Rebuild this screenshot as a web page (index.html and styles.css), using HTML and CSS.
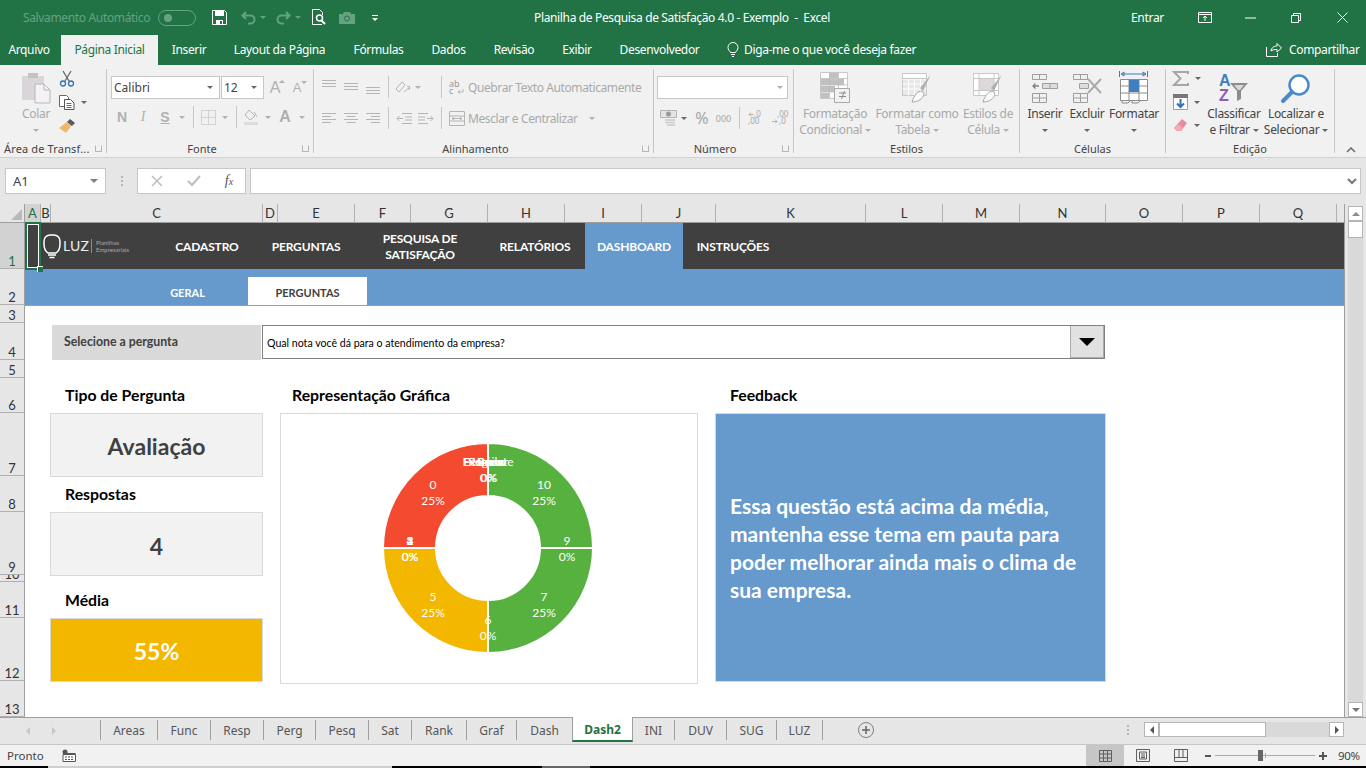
FILE: index.html
```html
<!DOCTYPE html>
<html lang="pt-BR">
<head>
<meta charset="utf-8">
<title>Planilha de Pesquisa de Satisfação 4.0 - Exemplo - Excel</title>
<link rel="stylesheet" href="styles.css">
</head>
<body>
<div class="app">
  <header class="titlebar">
    <div class="qat">
      <span class="autosave">Salvamento Automático</span>
      <span class="toggle"><i></i></span>
      <svg class="q-save" width="15" height="15" viewBox="0 0 15 15"><path d="M.5.5h12l2 2v12H.5z" fill="none" stroke="#fff"/><path d="M3 1h9v5H3zM4 10h7v4H4z" fill="#fff"/><path d="M8 11h2v3H8z" fill="#217346"/></svg>
      <svg class="q-undo" width="15" height="13" viewBox="0 0 15 13"><path d="M5 1L1.500 4.500 5 8M2 4.500h7.500a4 4 0 0 1 0 8H7" fill="none" stroke="#64a282" stroke-width="2"/></svg>
      <span class="car dim q-c1"></span>
      <svg class="q-redo" width="15" height="13" viewBox="0 0 15 13"><path d="M10 1l3.500 3.500L10 8M13 4.500H5.500a4 4 0 0 0 0 8H8" fill="none" stroke="#64a282" stroke-width="2"/></svg>
      <span class="car dim q-c2"></span>
      <svg class="q-prev" width="15" height="17" viewBox="0 0 15 17"><path d="M10 15.500H.5V.5h7l3 3V6" fill="none" stroke="#fff"/><circle cx="7.500" cy="9" r="3" fill="none" stroke="#fff" stroke-width="1.500"/><path d="M9.500 11.500l3.500 3.500" stroke="#fff" stroke-width="2"/></svg>
      <svg class="q-cam" width="16" height="13" viewBox="0 0 16 13"><path d="M0 3h4l1-2h6l1 2h4v10H0z" fill="#64a282"/><circle cx="8" cy="7.500" r="2.500" fill="none" stroke="#217346"/></svg>
      <svg class="q-more" width="8" height="8" viewBox="0 0 8 8"><path d="M1 1h6v1H1zM1 4h6L4 7z" fill="#fff"/></svg>
    </div>
    <div class="doc-title">Planilha de Pesquisa de Satisfação 4.0 - Exemplo&nbsp; -&nbsp; Excel</div>
    <div class="winctl">
      <span class="entrar">Entrar</span>
      <svg width="14" height="11" viewBox="0 0 14 11"><path d="M.5.5h13v10H.5zM.5 2.500h13M7 9V4.500M5 6l2-2 2 2" fill="none" stroke="#fff"/></svg>
      <svg width="11" height="2" viewBox="0 0 11 2"><path d="M0 1h11" stroke="#fff"/></svg>
      <svg width="10" height="10" viewBox="0 0 10 10"><path d="M.5 2.500h7v7h-7zM2.500 2.500v-2h7v7h-2" fill="none" stroke="#fff"/></svg>
      <svg width="11" height="11" viewBox="0 0 11 11"><path d="M.5.500l10 10M10.500.500l-10 10" stroke="#fff"/></svg>
    </div>
  </header>

  <nav class="tabs">
    <span class="tab">Arquivo</span>
    <span class="tab active">Página Inicial</span>
    <span class="tab">Inserir</span>
    <span class="tab">Layout da Página</span>
    <span class="tab">Fórmulas</span>
    <span class="tab">Dados</span>
    <span class="tab">Revisão</span>
    <span class="tab">Exibir</span>
    <span class="tab">Desenvolvedor</span>
    <span class="tell">
      <svg width="12" height="15" viewBox="0 0 12 15"><path d="M3.500 10.500C2.500 8.500 1 8 1 5.500a5 5 0 0 1 10 0c0 2.500-1.500 3-2.500 5zM4 12.500h4M5 14.500h2" fill="none" stroke="#fff"/></svg>
      Diga-me o que você deseja fazer
    </span>
    <span class="share">
      <svg width="16" height="15" viewBox="0 0 16 15"><path d="M.5 5v9.500h11V11M5 9c0-3 3-5 6-5V1.500L15.500 6 11 10V7.500C8 7.500 6 8 5 9z" fill="none" stroke="#fff"/></svg>
      Compartilhar
    </span>
  </nav>

  <section class="ribbon">
    <div class="grp g-clip">
      <div class="clip-body">
        <div class="big b-colar">
          <div class="ico"><svg width="30" height="31" viewBox="0 0 30 31"><path d="M1 4h22v24H1z" fill="#d9d5d9"/><path d="M7 1h10v5H7z" fill="#c4c0c4"/><path d="M14 12h9l6 6v13H14z" fill="#f4f2f4" stroke="#b9b5b9"/><path d="M23 12v6h6" fill="none" stroke="#b9b5b9"/></svg></div>
          <span class="cap off">Colar</span>
          <span class="cap off"><span class="car"></span></span>
        </div>
        <div class="clip-tools">
          <svg width="16" height="16" viewBox="0 0 16 16"><path d="M4 0l6 10M12 0L6 10" stroke="#666" stroke-width="1.300" fill="none"/><circle cx="4" cy="12.500" r="2.500" fill="none" stroke="#2e75b6" stroke-width="1.300"/><circle cx="12" cy="12.500" r="2.500" fill="none" stroke="#2e75b6" stroke-width="1.300"/></svg>
          <div class="tool-car"><svg width="16" height="15" viewBox="0 0 16 15"><path d="M.5.500h7l2 2v9H.5z" fill="#fff" stroke="#666"/><path d="M5.500 4.500h6l3.500 3.500v6.500H5.500z" fill="#fff" stroke="#555"/><path d="M7.500 8.500h5M7.500 10.500h5M7.500 12.500h5" stroke="#2e75b6"/></svg><span class="car dk"></span></div>
          <svg width="17" height="15" viewBox="0 0 17 15"><path d="M9 3l5 4-1 1-5-4z" fill="#444"/><path d="M11 1l5 4-2 2-5-4z" fill="#555"/><path d="M8 4l4 4-5 7-7-5z" fill="#eeb86b"/></svg>
        </div>
      </div>
      <div class="glabel lbl-clip"><span>Área de Transf...</span><span class="launch"></span></div>
    </div>

    <div class="grp g-font">
      <div class="font-r1">
        <div class="combo"><span>Calibri</span><span class="car dk"></span></div>
        <div class="combo"><span>12</span><span class="car dk"></span></div>
        <span class="letter grow">A</span>
        <span class="letter shrink">A</span>
      </div>
      <div class="font-r2">
        <b class="btn-l">N</b><i class="btn-l serif">I</i><u class="btn-l bold">S</u><span class="car"></span><span class="vsep"></span>
        <svg width="15" height="15" viewBox="0 0 15 15"><path d="M.5.500h14v14H.5zM7.500.500v14M.5 7.500h14" fill="none" stroke="#b5b5b5" stroke-dasharray="1 1"/></svg><span class="car"></span><span class="vsep"></span>
        <svg width="16" height="16" viewBox="0 0 16 16"><path d="M6 1l6 6-5 4-5-5zM11 3l3 5" fill="none" stroke="#b5b5b5"/><path d="M1 13h14v3H1z" fill="#ddd"/></svg><span class="car"></span>
        <span class="letter big-a">A</span><span class="car"></span>
      </div>
      <div class="glabel lbl-font"><span>Fonte</span><span class="launch"></span></div>
    </div>

    <div class="grp g-align">
      <div class="align-top">
        <div class="al-r1">
          <svg width="15" height="15" viewBox="0 0 15 15"><path d="M0 .5h14M0 3.500h14M0 6.500h14" stroke="#b5b5b5"/></svg>
          <svg width="15" height="15" viewBox="0 0 15 15"><path d="M0 3.500h14M0 6.500h14M0 9.500h14" stroke="#b5b5b5"/></svg>
          <svg width="15" height="15" viewBox="0 0 15 15"><path d="M0 7.500h14M0 10.500h14M0 13.500h14" stroke="#b5b5b5"/></svg>
          <span class="vsep"></span>
          <svg width="16" height="16" viewBox="0 0 16 16"><path d="M1 10l6-7 3 3-6 7zM9 13l6-5M12 7l3 1-1 3" fill="none" stroke="#b5b5b5"/></svg>
          <span class="car"></span><span></span>
          <span class="vsep"></span>
          <div class="wrap-cell"><svg width="16" height="15" viewBox="0 0 16 15"><text class="ab" x="0" y="7">ab</text><text class="ab" x="0" y="14">c</text><path d="M14 9v3H9m2-1.500L9 12l2 1.500" fill="none" stroke="#b5b5b5"/></svg><span class="off rtext">Quebrar Texto Automaticamente</span></div>
        </div>
        <div class="al-r2">
          <svg width="15" height="13" viewBox="0 0 15 13"><path d="M0 1.500h14M0 4.500h9M0 7.500h14M0 10.500h9" stroke="#b5b5b5"/></svg>
          <svg width="15" height="13" viewBox="0 0 15 13"><path d="M0 1.500h14M2.500 4.500h9M0 7.500h14M2.500 10.500h9" stroke="#b5b5b5"/></svg>
          <svg width="15" height="13" viewBox="0 0 15 13"><path d="M0 1.500h14M5 4.500h9M0 7.500h14M5 10.500h9" stroke="#b5b5b5"/></svg>
          <span class="vsep"></span>
          <svg width="16" height="13" viewBox="0 0 16 13"><path d="M6 1.500h10M6 11.500h10M9 5h7M9 8h7M7 6.500H1M3.500 4L1 6.500 3.500 9" fill="none" stroke="#b5b5b5"/></svg>
          <svg width="16" height="13" viewBox="0 0 16 13"><path d="M0 1.500h10M0 11.500h10M0 5h7M0 8h7M9 6.500h6M12.500 4L15 6.500 12.500 9" fill="none" stroke="#b5b5b5"/></svg>
          <span class="vsep"></span>
          <div class="wrap-cell"><svg width="16" height="15" viewBox="0 0 16 15"><path d="M.5.500h15v14H.5zM.5 5h15M.5 10h15M3 7.500h10M3 7.500l2-1.500M3 7.500L5 9M13 7.500L11 6M13 7.500L11 9" fill="none" stroke="#b5b5b5"/></svg><span class="off rtext">Mesclar e Centralizar</span><span class="car merge-car"></span></div>
        </div>
      </div>
      <div class="glabel lbl-align"><span>Alinhamento</span><span class="launch"></span></div>
    </div>

    <div class="grp g-num">
      <div class="combo combo-num"><span></span><span class="car"></span></div>
      <div class="num-r2">
        <svg width="17" height="16" viewBox="0 0 17 16"><path d="M.5.500h16v7H.5z" fill="#e4e4e4" stroke="#b5b5b5"/><circle cx="8.500" cy="4" r="2.500" fill="#999"/><path d="M5 10h10M5 12.500h10M7 15h8" stroke="#c9c9c9" stroke-width="1.500"/></svg>
        <span class="car dk"></span>
        <span class="pct">%</span>
        <span class="thou">000</span>
        <span class="vsep"></span>
        <svg width="18" height="14" viewBox="0 0 18 14"><text class="dec" x="6" y="6">,0</text><text class="dec" x="0" y="13">,00</text><path d="M1 3.500h5M1 3.500l2-2M1 3.500l2 2" fill="none" stroke="#b5b5b5"/></svg>
        <svg width="18" height="14" viewBox="0 0 18 14"><text class="dec" x="6" y="6">,00</text><text class="dec" x="8" y="13">,0</text><path d="M1 10.500h5M6 10.500l-2-2M6 10.500l-2 2" fill="none" stroke="#b5b5b5"/></svg>
      </div>
      <div class="glabel lbl-num"><span>Número</span><span class="launch"></span></div>
    </div>

    <div class="grp g-styles">
      <div class="bigrow">
        <div class="big">
          <div class="ico"><svg width="30" height="31" viewBox="0 0 30 31"><path d="M.5.500h27v26H.5z" fill="#fff" stroke="#c8c8c8"/><path d="M.5 6.500h27M.5 13h27M.5 20h27M9.500.500v26M18.500.500v26" stroke="#c8c8c8"/><path d="M9 1h9v5H9zM1 7h23v6H1zM1 14h14v6H1zM1 21h8v5H1z" fill="#b9b9b9" opacity=".9"/><path d="M14.500 16.500h15v14h-15z" fill="#f2f2f2" stroke="#a9a9a9"/><path d="M19 21h7M19 24.500h7M24.500 19l-3 8" stroke="#8c8c8c" fill="none"/></svg></div>
          <span class="cap off">Formatação</span>
          <span class="cap off">Condicional <span class="car"></span></span>
        </div>
        <div class="big">
          <div class="ico"><svg width="30" height="30" viewBox="0 0 30 30"><path d="M.5 2.500h24v20H.5z" fill="#e8e8e8" stroke="#c8c8c8"/><path d="M.5 6h24M.5 11h24M.5 16h24M6.500 2.500v20M12.500 2.500v20M18.500 2.500v20" stroke="#fff"/><path d="M.5.500h24v5H.5z" fill="#fff" stroke="#c8c8c8"/><path d="M28.500 2L18 15l3 3z" fill="#b0b0b0"/><path d="M10 29c2-7 6-11 10-11l2 3c-1 5-6 8-12 8z" fill="#fafafa" stroke="#a9a9a9"/></svg></div>
          <span class="cap off">Formatar como</span>
          <span class="cap off">Tabela <span class="car"></span></span>
        </div>
        <div class="big">
          <div class="ico"><svg width="30" height="30" viewBox="0 0 30 30"><path d="M.5.500h25v22H.5z" fill="#fff" stroke="#c8c8c8"/><path d="M6 5.500h15v12H6z" fill="#dcd8dc"/><path d="M.5 5.500h25M.5 17.500h25M6 .500v22M21 .500v22" stroke="#c8c8c8"/><path d="M28.500 2L18 15l3 3z" fill="#b0b0b0"/><path d="M10 29c2-7 6-11 10-11l2 3c-1 5-6 8-12 8z" fill="#fafafa" stroke="#a9a9a9"/></svg></div>
          <span class="cap off">Estilos de</span>
          <span class="cap off">Célula <span class="car"></span></span>
        </div>
      </div>
      <div class="glabel"><span>Estilos</span></div>
    </div>

    <div class="grp g-cells">
      <div class="bigrow">
        <div class="big">
          <div class="ico"><svg width="28" height="30" viewBox="0 0 28 30"><path d="M1.500 1.500h14v5h-14zM8.500 1.500v5M1.500 20.500h14v9h-14zM1.500 25h14M8.500 20.500v9" fill="none" stroke="#9e9e9e"/><path d="M11.500 10.500h15v5h-15zM19 10.500v5" fill="#ddd" stroke="#9e9e9e"/><path d="M8 13H2M4.500 10.500L2 13l2.500 2.500" fill="none" stroke="#7f7f7f" stroke-width="1.300"/></svg></div>
          <span class="cap on">Inserir</span>
          <span class="cap on"><span class="car dk"></span></span>
        </div>
        <div class="big">
          <div class="ico"><svg width="30" height="30" viewBox="0 0 30 30"><path d="M1.500 1.500h14v5h-14zM8.500 1.500v5M1.500 20.500h14v9h-14zM1.500 25h14M8.500 20.500v9" fill="none" stroke="#9e9e9e"/><path d="M7.500 10.500h9v5h-9z" fill="#ddd" stroke="#9e9e9e"/><path d="M16 6l13 14M29 6L16 20" stroke="#aaa" stroke-width="2"/></svg></div>
          <span class="cap on">Excluir</span>
          <span class="cap on"><span class="car dk"></span></span>
        </div>
        <div class="big">
          <div class="ico"><svg width="30" height="33" viewBox="0 0 30 33"><path d="M.5 0v6M28.500 0v6M2 3h25M2 3l3-2v4zM27 3l-3-2v4z" fill="none" stroke="#3a7dbd"/><path d="M1.500 8.500h27v21h-27zM1.500 15h27M1.500 22h27M10 8.500v21M20 8.500v21" fill="#fff" stroke="#8c8c8c"/><path d="M10 9h10v12H10z" fill="#3f7fbf"/><path d="M3 30v2h6l2-2M13 30v2h6l2-2" fill="none" stroke="#8c8c8c"/></svg></div>
          <span class="cap on">Formatar</span>
          <span class="cap on"><span class="car dk"></span></span>
        </div>
      </div>
      <div class="glabel"><span>Células</span></div>
    </div>

    <div class="grp g-edit">
      <div class="bigrow">
        <div class="edit-tools">
          <div class="tool-car"><svg width="16" height="15" viewBox="0 0 16 15"><path d="M15 3V1H1l6.500 6.500L1 14h14v-2" fill="none" stroke="#a6a6a6" stroke-width="2"/></svg><span class="car dk"></span></div>
          <div class="tool-car"><svg width="15" height="16" viewBox="0 0 15 16"><path d="M.5.500h14v15H.5z" fill="#fff" stroke="#9e9e9e"/><path d="M0 0h15v4H0z" fill="#777"/><path d="M7.500 5v8M4 9.500l3.500 3.500L11 9.500" fill="none" stroke="#2e75b6" stroke-width="2"/></svg><span class="car dk"></span></div>
          <div class="tool-car"><svg width="15" height="14" viewBox="0 0 15 14"><path d="M9 1l5 4-6 8H4L1 10z" fill="#ec8a9a"/><path d="M1 10l3 3h4l2-3-5-4z" fill="#f4a8b4"/></svg><span class="car dk"></span></div>
        </div>
        <div class="big">
          <div class="ico"><svg width="30" height="28" viewBox="0 0 30 28"><text class="az-a" x="0" y="12">A</text><text class="az-z" x="0" y="27">Z</text><path d="M11 9h18l-7 8v8l-4 2V17z" fill="#8c8c8c"/><path d="M15 11h10l-4 5h-2z" fill="#d9d9d9"/></svg></div>
          <span class="cap on">Classificar</span>
          <span class="cap on">e Filtrar <span class="car dk"></span></span>
        </div>
        <div class="big">
          <div class="ico"><svg width="30" height="30" viewBox="0 0 30 30"><circle cx="18" cy="12" r="9.500" fill="#fff" stroke="#4a8ac9" stroke-width="2.500"/><path d="M11 19L2 28" stroke="#4a8ac9" stroke-width="4" stroke-linecap="round"/></svg></div>
          <span class="cap on">Localizar e</span>
          <span class="cap on">Selecionar <span class="car dk"></span></span>
        </div>
      </div>
      <div class="glabel"><span>Edição</span></div>
    </div>

    <div class="collapse"><svg width="10" height="6" viewBox="0 0 10 6"><path d="M1 5l4-4 4 4" fill="none" stroke="#666" stroke-width="1.500"/></svg></div>
  </section>

  <section class="fbar">
    <div class="namebox"><span>A1</span><span class="car big-car"></span></div>
    <div class="fdots"></div>
    <div class="fbtns">
      <svg width="12" height="12" viewBox="0 0 12 12"><path d="M1 1l10 10M11 1L1 11" stroke="#bdbdbd" stroke-width="1.500"/></svg>
      <svg width="14" height="12" viewBox="0 0 14 12"><path d="M1 6l4 4 8-9" fill="none" stroke="#bdbdbd" stroke-width="2"/></svg>
      <i class="fx">f<small>x</small></i>
    </div>
    <div class="finput"><svg width="10" height="6" viewBox="0 0 10 6"><path d="M1 1l4 4 4-4" fill="none" stroke="#777" stroke-width="2"/></svg></div>
  </section>

  <section class="workarea">
    <div class="sheet">
      <div class="corner"><span></span></div>
      <div class="ch on-col">A</div><div class="ch">B</div><div class="ch">C</div><div class="ch">D</div><div class="ch">E</div><div class="ch">F</div><div class="ch">G</div><div class="ch">H</div><div class="ch">I</div><div class="ch">J</div><div class="ch">K</div><div class="ch">L</div><div class="ch">M</div><div class="ch">N</div><div class="ch">O</div><div class="ch">P</div><div class="ch">Q</div><div class="ch filler"></div>
      <div class="rh on-row">1</div><div class="rh">2</div><div class="rh">3</div><div class="rh">4</div><div class="rh">5</div><div class="rh">6</div><div class="rh">7</div><div class="rh">8</div><div class="rh">9</div><div class="rh">10</div><div class="rh">11</div><div class="rh">12</div><div class="rh">13</div>

      <div class="topnav">
        <div class="logo">
          <svg width="18" height="25" viewBox="0 0 18 25"><path d="M5 19C2 17 1 14.500 1 10V7a6 6 0 0 1 6-6h4a6 6 0 0 1 6 6v3c0 4.500-1 7-4 9z" fill="none" stroke="#fff" stroke-width="1.500"/><path d="M5 21h8M6.500 23.500h5" stroke="#fff" stroke-width="1.500"/></svg>
          <span class="luz">LUZ</span>
          <span class="logo-sep"></span>
          <span class="logo-sub">Planilhas<br>Empresariais</span>
        </div>
        <span class="ni ni-cad">CADASTRO</span>
        <span class="ni ni-per">PERGUNTAS</span>
        <span class="ni ni-pes">PESQUISA DE<br>SATISFAÇÃO</span>
        <span class="ni ni-rel">RELATÓRIOS</span>
        <span class="ni ni-das">DASHBOARD</span>
        <span class="ni ni-ins">INSTRUÇÕES</span>
      </div>
      <div class="a1"><i></i></div>

      <div class="subnav">
        <span class="si si-ger">GERAL</span>
        <span class="si si-per">PERGUNTAS</span>
      </div>

      <div class="qlabel">Selecione a pergunta</div>
      <div class="qselect"><span>Qual nota você dá para o atendimento da empresa?</span><div class="qbtn"><i></i></div></div>

      <div class="ttl ttl-tipo">Tipo de Pergunta</div>
      <div class="card card-tipo">Avaliação</div>
      <div class="ttl ttl-resp">Respostas</div>
      <div class="card card-resp">4</div>
      <div class="ttl ttl-med">Média</div>
      <div class="card card-med">55%</div>

      <div class="ttl ttl-graf">Representação Gráfica</div>
      <div class="chart">
        <svg width="416" height="268" viewBox="0 0 416 268">
          <g transform="translate(207 134)" class="donut">
            <path class="s-green" d="M0-105A105 105 0 0 1 105 0H52A52 52 0 0 0 0-52Z"/>
            <path class="s-green" d="M105 0A105 105 0 0 1 0 105V52A52 52 0 0 0 52 0Z"/>
            <path class="s-yellow" d="M0 105A105 105 0 0 1-105 0H-52A52 52 0 0 0 0 52Z"/>
            <path class="s-red" d="M-105 0A105 105 0 0 1 0-105V-52A52 52 0 0 0-52 0Z"/>
            <text x="56" y="-64">10</text><text x="56" y="-48">25%</text>
            <text x="-55" y="-64">0</text><text x="-55" y="-48">25%</text>
            <text x="79" y="-8">9</text><text x="79" y="8">0%</text>
            <text x="56" y="48">7</text><text x="56" y="64">25%</text>
            <text x="0" y="71">6</text><text x="0" y="87">0%</text>
            <text x="-55" y="48">5</text><text x="-55" y="64">25%</text>
            <text x="-78" y="-8">1</text><text x="-78" y="-8">2</text><text x="-78" y="-8">3</text><text x="-78" y="-8">4</text>
            <text x="-78" y="8">0%</text><text x="-78" y="8">0%</text>
            <text x="0" y="-87">Excelente</text><text x="0" y="-87">Regular</text><text x="-3" y="-87">Péssimo</text><text x="3" y="-87">Ruim</text><text x="1" y="-87">Bom</text>
            <text x="0" y="-71">0%</text><text x="1" y="-71">0%</text>
          </g>
        </svg>
      </div>

      <div class="ttl ttl-feed">Feedback</div>
      <div class="feedback">Essa questão está acima da média, mantenha esse tema em pauta para poder melhorar ainda mais o clima de sua empresa.</div>
    </div>

    <aside class="vscroll">
      <div class="vbtn"><span class="tri-up"></span></div>
      <div class="vthumb"></div>
      <div class="vtrack"></div>
      <div class="vbtn"><span class="tri-dn"></span></div>
    </aside>
  </section>

  <section class="sheetbar">
    <div class="sheetnav"><span class="tri-l"></span><span class="tri-r"></span></div>
    <span class="st">Areas</span><span class="st">Func</span><span class="st">Resp</span><span class="st">Perg</span><span class="st">Pesq</span><span class="st">Sat</span><span class="st">Rank</span><span class="st">Graf</span><span class="st st-pre">Dash</span><span class="st st-on">Dash2</span><span class="st">INI</span><span class="st">DUV</span><span class="st">SUG</span><span class="st">LUZ</span>
    <div class="addsheet"><svg width="18" height="18" viewBox="0 0 18 18"><circle cx="9" cy="9" r="7.500" fill="none" stroke="#808080"/><path d="M9 5v8M5 9h8" stroke="#666" stroke-width="1.500"/></svg></div>
    <div class="hdots"></div>
    <div class="hscroll">
      <div class="hbtn"><span class="tri-lk"></span></div>
      <div class="hthumb"></div>
      <div class="htrack"></div>
      <div class="hbtn"><span class="tri-rk"></span></div>
    </div>
  </section>

  <footer class="status">
    <span class="pronto">Pronto</span>
    <svg class="macro" width="14" height="13" viewBox="0 0 14 13"><circle cx="3" cy="3" r="2.500" fill="#555"/><path d="M1 5.500h12.500v7H1z" fill="#fff" stroke="#555"/><path d="M3 4h10.500v2H3z" fill="#555"/><path d="M3 8h2M6 8h2M9 8h2M3 10.500h2M6 10.500h2M9 10.500h2" stroke="#555"/></svg>
    <div class="views">
      <div class="vw vw-on"><svg width="13" height="12" viewBox="0 0 13 12"><path d="M.5.500h12v11H.5zM.5 4h12M.5 8h12M4.500.500v11M8.500.500v11" fill="none" stroke="#5f5f5f"/></svg></div>
      <div class="vw"><svg width="14" height="13" viewBox="0 0 14 13"><path d="M.5.500h13v12H.5z" fill="none" stroke="#5f5f5f"/><path d="M3.500 3h7v7h-7zM5 5h4M5 7h4M5 8.500h4" fill="none" stroke="#5f5f5f"/></svg></div>
      <div class="vw"><svg width="14" height="13" viewBox="0 0 14 13"><path d="M.5.500h13v12H.5zM.5 8.500h13M5 .500v8M9 .500v8" fill="none" stroke="#5f5f5f"/></svg></div>
    </div>
    <div class="zoomctl">
      <i class="zminus"></i>
      <div class="zslider"><i class="zthumb"></i><i class="ztick"></i></div>
      <svg width="8" height="8" viewBox="0 0 8 8"><path d="M0 4h8M4 0v8" stroke="#555" stroke-width="2"/></svg>
      <span class="zpct">90%</span>
    </div>
  </footer>
  <div class="edge"><i class="e-k1"></i><i class="e-g1"></i><i class="e-k2"></i><i class="e-g2"></i><i class="e-k3"></i></div>
</div>
</body>
</html>
```

FILE: styles.css
```css
* { box-sizing: border-box; }
html, body { margin: 0; padding: 0; }
body { width: 1366px; height: 768px; overflow: hidden; background: #e6e6e6; font-family: "Noto Sans", "Open Sans", sans-serif; font-size: 12px; color: #444; }
.app { display: flex; flex-direction: column; width: 1366px; height: 768px; }
svg { display: block; flex: none; overflow: visible; }

/* title bar */
.titlebar { height: 35px; background: #217346; color: #fff; display: flex; align-items: center; }
.qat { width: 534px; flex: none; display: flex; align-items: center; padding-left: 23px; }
.autosave { width: 135px; flex: none; color: #64a282; white-space: nowrap; letter-spacing: -.35px; }
.toggle { width: 38px; height: 16px; flex: none; border: 1px solid #64a282; border-radius: 8px; position: relative; }
.toggle i { position: absolute; left: 5px; top: 3px; width: 8px; height: 8px; border-radius: 50%; background: #64a282; }
.q-save { margin-left: 16px; }
.q-undo { margin-left: 14px; }
.q-c1 { margin-left: 4px; }
.q-redo { margin-left: 10px; }
.q-c2 { margin-left: 4px; }
.q-prev { margin-left: 11px; }
.q-cam { margin-left: 12px; }
.q-more { margin-left: 16px; }
.car { display: inline-block; width: 0; height: 0; border-left: 3px solid transparent; border-right: 3px solid transparent; border-top: 3px solid #b0b0b0; vertical-align: middle; flex: none; }
.car.dk { border-top-color: #666; }
.car.dim { border-top-color: #64a282; }
.doc-title { width: 400px; flex: none; white-space: pre; letter-spacing: -.35px; }
.winctl { flex: 1; display: grid; grid-template-columns: 197px 51px 46px 45px 46px 46px; align-items: center; justify-items: center; }
.entrar { grid-column: 2; justify-self: start; letter-spacing: -.3px; }

/* tabs */
.tabs { height: 30px; background: #217346; color: #fff; display: grid; grid-template-columns: 58px 100px 62px 119px 79px 61px 70px 56px 109px 1fr 100px; align-items: stretch; }
.tab { display: flex; align-items: center; justify-content: center; white-space: nowrap; letter-spacing: -.35px; padding-bottom: 2px; }
.tab:first-child { margin-left: 3px; margin-right: 3px; }
.tab.active { background: #f1f1f1; color: #217346; margin-left: 3px; }
.tell { display: flex; align-items: center; gap: 5px; padding-left: 13px; white-space: nowrap; letter-spacing: -.35px; padding-bottom: 2px; }
.share { display: flex; align-items: center; gap: 7px; white-space: nowrap; letter-spacing: -.35px; padding-bottom: 2px; }

/* ribbon */
.ribbon { height: 93px; background: #f1f1f1; border-bottom: 1px solid #d2d2d2; display: flex; padding-top: 4px; }
.grp { height: 84px; border-right: 1px solid #c6c6c6; display: flex; flex-direction: column; flex: none; }
.g-clip { width: 107px; }
.g-font { width: 207px; padding-left: 4px; }
.g-align { width: 340px; }
.g-num { width: 140px; padding-left: 3px; }
.g-styles { width: 226px; }
.g-cells { width: 146px; }
.g-edit { width: 169px; }
.glabel { margin-top: auto; margin-bottom: -3px; height: 14px; line-height: 14px; font-size: 11px; color: #444; position: relative; text-align: center; white-space: nowrap; }
.lbl-clip { text-align: left; padding-left: 4px; letter-spacing: .15px; }
.lbl-font { padding-right: 20px; }
.lbl-align { padding-right: 16px; }
.lbl-num { padding-right: 20px; }
.launch { position: absolute; right: 4px; top: 3px; width: 7px; height: 7px; border: 1px solid #b5b5b5; border-top-color: transparent; }
.clip-body { display: flex; padding-left: 20px; }
.b-colar { width: 32px; }
.clip-tools { display: flex; flex-direction: column; gap: 8px; margin-left: 7px; padding-top: 2px; }
.tool-car { display: flex; align-items: center; gap: 6px; }
.big { display: flex; flex-direction: column; align-items: center; }
.ico { height: 37px; display: flex; align-items: center; justify-content: center; }
.cap { height: 16px; line-height: 16px; white-space: nowrap; font-size: 12px; letter-spacing: -.3px; }
.off { color: #a9a9a9; }
.on { color: #444; }
.font-r1 { display: grid; grid-template-columns: 110px 43px 22px 22px; margin-top: 7px; height: 23px; align-items: center; }
.combo { height: 23px; background: #fff; border: 1px solid #c6c6c6; display: flex; align-items: center; justify-content: space-between; padding: 0 6px 0 2px; color: #444; margin-right: 1px; }
.combo + .combo { margin-right: 0; }
.letter { font-family: "Liberation Sans", sans-serif; text-align: center; color: #b0b0b0; position: relative; }
.grow { font-size: 16px; }
.shrink { font-size: 13px; }
.grow::after, .shrink::after { content: ""; position: absolute; left: 15px; top: 1px; border-left: 3px solid transparent; border-right: 3px solid transparent; }
.grow::after { border-bottom: 3px solid #b0b0b0; }
.shrink::after { border-top: 3px solid #b0b0b0; }
.big-a { font-size: 16px; font-weight: 700; }
.font-r2 { display: grid; grid-template-columns: 22px 20px 24px 10px 12px 18px 16px 6px 24px 10px 24px 10px; height: 24px; margin-top: 6px; align-items: center; justify-items: center; }
.btn-l { font-size: 14px; color: #b0b0b0; font-family: "Liberation Sans", sans-serif; text-decoration-thickness: 1px; }
.btn-l.serif { font-family: "Liberation Serif", serif; font-style: italic; }
.btn-l.bold { font-weight: 700; }
.vsep { width: 1px; height: 22px; background: #c6c6c6; justify-self: center; }
.align-top { padding: 5px 0 0 4px; display: flex; flex-direction: column; gap: 5px; }
.al-r1, .al-r2 { height: 26px; display: grid; align-items: center; justify-items: center; }
.al-r1 { grid-template-columns: 22px 23px 21px 8px 22px 8px 15px 8px 1fr; }
.al-r2 { grid-template-columns: 22px 23px 21px 8px 23px 22px 8px 1fr; }
.wrap-cell { justify-self: start; display: flex; align-items: center; padding-left: 4px; gap: 3px; white-space: nowrap; }
.rtext { letter-spacing: -.4px; }
.merge-car { margin-left: 8px; }
.ab { font-size: 9px; fill: #999; font-family: "Noto Sans", sans-serif; }
.combo-num { width: 131px; margin-top: 7px; flex: none; padding-right: 4px; border-color: #c6c6c6; }
.num-r2 { display: grid; grid-template-columns: 22px 10px 26px 17px 14px 22px 24px; height: 24px; margin-top: 7px; align-items: center; justify-items: center; }
.pct { font-size: 16px; color: #a6a6a6; }
.thou { font-size: 9px; color: #a6a6a6; }
.dec { font-size: 8px; fill: #a6a6a6; font-family: "Noto Sans", sans-serif; }
.bigrow { display: grid; }
.g-styles .bigrow { grid-template-columns: 82px 82px 60px; }
.g-cells .bigrow { grid-template-columns: 50px 34px 60px; }
.g-edit .bigrow { grid-template-columns: 41px 54px 70px; }
.edit-tools { display: flex; flex-direction: column; gap: 8px; padding: 2px 0 0 7px; }
.az-a { font: 700 16px "Liberation Sans", sans-serif; fill: #3f7fbf; }
.az-z { font: 700 16px "Liberation Sans", sans-serif; fill: #8f5bb5; }
.collapse { flex: 1; display: flex; align-items: flex-end; justify-content: center; height: 84px; }

/* formula bar */
.fbar { height: 46px; padding: 10px 5px 0; display: flex; align-items: flex-start; background: #e6e6e6; }
.namebox { width: 101px; height: 26px; background: #fff; border: 1px solid #c6c6c6; display: flex; align-items: center; justify-content: space-between; padding: 0 7px; font-size: 13px; color: #444; }
.big-car { border-left-width: 4px; border-right-width: 4px; border-top-width: 4px; border-top-color: #808080; }
.fdots { width: 31px; height: 26px; position: relative; }
.fdots::after { content: ""; position: absolute; left: 15px; top: 8px; width: 2px; height: 10px; background: repeating-linear-gradient(#b5b5b5 0 2px, transparent 2px 4px); }
.fbtns { width: 109px; height: 26px; background: #fff; border: 1px solid #c6c6c6; display: grid; grid-template-columns: 37px 38px 1fr; align-items: center; justify-items: center; }
.fx { font-family: "Liberation Serif", serif; font-size: 14px; color: #555; }
.fx small { font-size: 10px; }
.finput { flex: 1; height: 26px; margin-left: 4px; background: #fff; border: 1px solid #c6c6c6; display: flex; align-items: center; justify-content: flex-end; padding-right: 3px; }

/* sheet */
.workarea { height: 514px; display: flex; border-bottom: 1px solid #9e9e9e; }
.sheet { width: 1345px; flex: none; background: #fff; display: grid; grid-template-columns: 25px 16px 10px 212px 15px 77px 56px 77px 77px 77px 74px 150px 77px 77px 86px 77px 77px 77px 8px; grid-template-rows: 19px 46px 36px 18px 37px 18px 35px 63px 36px 63px 7px 36px 63px 36px; font-family: Lato, sans-serif; border-right: 1px solid #9e9e9e; overflow: hidden; }
.corner { background: #e6e6e6; border-right: 1px solid #9e9e9e; border-bottom: 1px solid #9e9e9e; position: relative; }
.corner span { position: absolute; right: 2px; bottom: 2px; width: 0; height: 0; border-left: 11px solid transparent; border-bottom: 11px solid #b9b9b9; }
.ch { background: #e6e6e6; border-right: 1px solid #b0b0b0; border-bottom: 1px solid #9e9e9e; display: flex; align-items: center; justify-content: center; font-size: 13px; color: #333; overflow: hidden; }
.ch.on-col { background: #d2d2d2; color: #217346; }
.ch.filler { border-right: 0; }
.rh { grid-column: 1; background: #e6e6e6; border-right: 1px solid #9e9e9e; border-bottom: 1px solid #b0b0b0; display: flex; align-items: flex-end; justify-content: center; font-size: 13px; line-height: 13px; color: #333; overflow: hidden; }
.rh.on-row { background: #d2d2d2; color: #217346; }
.topnav { grid-column: 2 / 20; grid-row: 2; background: #404040; display: flex; color: #fff; font-weight: 700; font-size: 12px; text-align: center; line-height: 16px; letter-spacing: -.15px; }
.logo { width: 132px; flex: none; display: flex; align-items: center; padding-left: 18px; color: #eee; letter-spacing: 0; }
.luz { margin-left: 2px; font-weight: 400; font-size: 14px; width: 24px; flex: none; letter-spacing: .2px; }
.logo-sep { width: 1px; height: 14px; background: #8c8c8c; margin: 0 4px 0 4px; flex: none; }
.logo-sub { font-size: 6px; line-height: 7px; font-weight: 400; text-align: left; color: #aaa; white-space: nowrap; }
.ni { display: flex; align-items: center; justify-content: center; flex: none; padding-top: 2px; }
.ni-cad { width: 100px; }
.ni-per { width: 98px; }
.ni-pes { width: 130px; }
.ni-rel { width: 100px; }
.ni-das { width: 98px; background: #6699cc; }
.ni-ins { width: 100px; }
.a1 { grid-column: 2; grid-row: 2; border: 2px solid #217346; outline: 1px solid #fff; outline-offset: -3px; margin: -1px 0 -1px 0; position: relative; z-index: 2; }
.a1 i { position: absolute; right: -4px; bottom: -4px; width: 6px; height: 6px; background: #217346; border-left: 1px solid #fff; border-top: 1px solid #fff; }
.subnav { grid-column: 2 / 20; grid-row: 3; background: #6699cc; display: flex; font-weight: 700; font-size: 11px; border-bottom: 1px solid #9e9e9e; color: #fff; align-items: stretch; margin-bottom: -1px; z-index: 1; }
.si { display: flex; align-items: center; justify-content: center; padding-top: 11px; }
.si-ger { width: 223px; padding-left: 102px; }
.si-per { width: 119px; background: #fff; color: #404040; margin-top: 8px; padding-top: 3px; }
.qlabel { grid-column: 4; grid-row: 5; margin: 2px 2px 0 1px; background: #d9d9d9; display: flex; align-items: center; padding: 0 0 3px 12px; font-weight: 700; font-size: 12.300px; color: #404040; white-space: nowrap; }
.qselect { grid-column: 5 / 16; grid-row: 5; margin: 2px 1px 1px -1px; background: #fff; border: 1px solid #808080; display: flex; align-items: center; justify-content: space-between; padding-left: 4px; font-size: 10.600px; color: #000; }
.qselect span { padding-top: 1px; }
.qbtn { width: 34px; align-self: stretch; background: #e1e1e1; border-left: 1px solid #adadad; border-right: 1px solid #adadad; border-bottom: 1px solid #adadad; display: flex; align-items: center; justify-content: center; }
.qbtn i { width: 0; height: 0; border-left: 8px solid transparent; border-right: 8px solid transparent; border-top: 8px solid #000; }
.ttl { font-weight: 700; font-size: 15.800px; color: #000; display: flex; align-items: center; padding: 0 0 2px 14px; white-space: nowrap; }
.ttl-tipo { grid-column: 4; grid-row: 7; }
.ttl-resp { grid-column: 4; grid-row: 9; }
.ttl-med { grid-column: 4; grid-row: 12; }
.ttl-graf { grid-column: 6 / 12; grid-row: 7; }
.ttl-feed { grid-column: 12 / 16; grid-row: 7; }
.card { grid-column: 4; margin: 0 0 -1px -1px; border: 1px solid #d9d9d9; background: #f2f2f2; display: flex; align-items: center; justify-content: center; font-weight: 700; font-size: 23px; color: #404040; padding-top: 1px; }
.card-tipo { grid-row: 8; }
.card-resp { grid-row: 10; padding-top: 3px; }
.card-med { grid-row: 13; background: #f3b700; color: #fff; }
.chart { grid-column: 6 / 12; grid-row: 8 / 14; margin: 0 18px -3px 2px; border: 1px solid #d9d9d9; background: #fff; }
.donut path { stroke: #fff; stroke-width: 2; }
.donut text { fill: #fff; font-size: 12px; text-anchor: middle; dominant-baseline: central; }
.s-green { fill: #57b13f; }
.s-yellow { fill: #f3b700; }
.s-red { fill: #f44a2f; }
.feedback { grid-column: 12 / 16; grid-row: 8 / 14; margin: 0 0 -1px -1px; background: #6699cc; border: 1px solid #d9d9d9; color: #fff; font-weight: 700; font-size: 21px; line-height: 28px; display: flex; align-items: center; padding: 0 15px 0 14px; }

/* vertical scrollbar */
.vscroll { flex: 1; padding: 2px 3px 0 3px; display: flex; flex-direction: column; background: #e6e6e6; }
.vbtn { height: 15px; flex: none; background: #fff; border: 1px solid #b5b5b5; display: flex; align-items: center; justify-content: center; }
.vthumb { height: 17px; flex: none; background: #fff; border: 1px solid #b5b5b5; }
.vtrack { flex: 1; background: #d9d9d9; }
.tri-up { border-left: 4px solid transparent; border-right: 4px solid transparent; border-bottom: 4px solid #8c8c8c; }
.tri-dn { border-left: 4px solid transparent; border-right: 4px solid transparent; border-top: 4px solid #777; }

/* sheet tabs */
.sheetbar { height: 27px; background: #e6e6e6; display: grid; grid-template-columns: 100px 58px 53px 53px 52px 53px 43px 55px 50px 55px 61px 42px 52px 50px 46px 60px 261px 222px; align-items: center; border-bottom: 1px solid #c6c6c6; }
.sheetnav { display: flex; align-items: center; gap: 22px; padding-left: 26px; }
.tri-l { border-top: 4px solid transparent; border-bottom: 4px solid transparent; border-right: 4px solid #c6c6c6; }
.tri-r { border-top: 4px solid transparent; border-bottom: 4px solid transparent; border-left: 4px solid #c6c6c6; }
.st { height: 20px; border-right: 1px solid #9e9e9e; display: flex; align-items: center; justify-content: center; color: #555; font-size: 12px; position: relative; margin-top: -3px; padding-top: 1px; }
.sheetnav + .st { border-left: 1px solid #9e9e9e; }
.st-pre { border-right: 0; }
.st-on { height: 25px; align-self: start; margin-top: -1px; background: #fff; border: 1px solid #9e9e9e; border-top: 0; border-bottom: 2px solid #217346; color: #217346; font-weight: 700; }
.addsheet { display: flex; padding-left: 34px; grid-column: 16; margin-top: -3px; }
.hdots { grid-column: 17; justify-self: end; width: 2px; height: 10px; margin-right: 15px; background: repeating-linear-gradient(#b5b5b5 0 2px, transparent 2px 4px); margin-top: -3px; }
.hscroll { grid-column: 18; display: flex; height: 15px; width: 200px; margin-top: -3px; }
.hbtn { width: 15px; flex: none; background: #fff; border: 1px solid #b5b5b5; display: flex; align-items: center; justify-content: center; }
.hthumb { width: 107px; flex: none; background: #fff; border: 1px solid #b5b5b5; }
.htrack { width: 63px; flex: none; background: #d9d9d9; }
.tri-lk { border-top: 4px solid transparent; border-bottom: 4px solid transparent; border-right: 4px solid #555; }
.tri-rk { border-top: 4px solid transparent; border-bottom: 4px solid transparent; border-left: 4px solid #555; }

/* status bar */
.status { height: 21px; background: #f1f1f1; display: flex; align-items: center; }
.pronto { width: 62px; flex: none; padding-left: 7px; font-size: 11.500px; color: #444; }
.views { margin-left: 1010px; display: flex; height: 21px; width: 114px; flex: none; }
.vw { width: 38px; display: flex; align-items: center; justify-content: center; }
.vw-on { background: #c6c6c6; }
.zoomctl { display: flex; align-items: center; flex: 1; padding-left: 5px; }
.zminus { width: 6px; height: 2px; background: #555; flex: none; }
.zslider { width: 100px; height: 1px; background: #aaa; margin: 0 4px; position: relative; flex: none; }
.zthumb { position: absolute; left: 43px; top: -5px; width: 5px; height: 11px; background: #666; }
.ztick { position: absolute; left: 50px; top: -2px; width: 1px; height: 5px; background: #aaa; }
.zpct { margin-left: 11px; font-size: 11.500px; color: #444; letter-spacing: -.3px; }
.edge { height: 2px; display: flex; }
.edge i { display: block; height: 2px; }
.e-k1 { width: 48px; background: #000; }
.e-g1 { width: 344px; background: #cfcfcf; }
.e-k2 { width: 150px; background: #000; }
.e-g2 { width: 48px; background: #666; }
.e-k3 { flex: 1; background: #000; }
```
